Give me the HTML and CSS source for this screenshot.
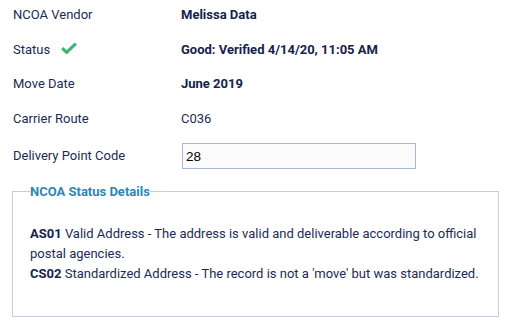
FILE: index.html
```html
<!DOCTYPE html>
<html>
<head>
<meta charset="utf-8">
<link rel="stylesheet" href="styles.css">
</head>
<body>
<div class="panel">
  <div class="rows">
    <div class="row">
      <div class="label">NCOA Vendor</div>
      <div class="value strong">Melissa Data</div>
    </div>
    <div class="row">
      <div class="label">Status
        <svg class="check" viewBox="0 0 16 12" width="16" height="12"><path d="M1.2 6.2 L5.6 10.4 L14.8 1.6" fill="none" stroke="#3bb77a" stroke-width="3.2" stroke-linejoin="round"/></svg>
      </div>
      <div class="value strong">Good: Verified 4/14/20, 11:05 AM</div>
    </div>
    <div class="row">
      <div class="label">Move Date</div>
      <div class="value strong">June 2019</div>
    </div>
    <div class="row">
      <div class="label">Carrier Route</div>
      <div class="value">C036</div>
    </div>
    <div class="row">
      <div class="label">Delivery Point Code</div>
      <div class="value"><input class="field" type="text" value="28"></div>
    </div>
  </div>
  <fieldset class="details">
    <legend class="details-title">NCOA Status Details</legend>
    <p class="details-text"><b>AS01</b> Valid Address - The address is valid and deliverable according to official postal agencies.<br><b>CS02</b> Standardized Address - The record is not a 'move' but was standardized.</p>
  </fieldset>
</div>
</body>
</html>
```
FILE: styles.css
```css
html, body {
  margin: 0;
  padding: 0;
  background: #ffffff;
}
body {
  font-family: Roboto, "Liberation Sans", sans-serif;
  font-size: 13px;
  color: #1c2b55;
}
.panel {
  width: 511px;
}
.rows {
  display: flex;
  flex-direction: column;
  gap: 14.5px;
  padding: 5px 0 0 13px;
}
.row {
  display: grid;
  grid-template-columns: 168px 1fr;
  align-items: center;
  height: 20px;
  line-height: 20px;
}
.label {
  display: flex;
  align-items: center;
}
.check {
  margin-left: 11px;
  margin-top: -3px;
}
.strong {
  font-weight: 700;
  color: #14234d;
}
.field {
  box-sizing: border-box;
  width: 234px;
  height: 26px;
  margin: 0 0 0 1px;
  padding: 0 3px;
  border: 1px solid #a9b8d6;
  background: #fbfbfb;
  font-family: "Liberation Sans", Arial, sans-serif;
  font-size: 13.5px;
  color: #000;
  outline: none;
}
.details {
  margin: 21px 12px 0 12px;
  padding: 0 17px 32px 17px;
  border: 1px solid #c3cfe0;
  min-width: 0;
}
.details-title {
  padding: 0;
  font-weight: 700;
  color: #2b87b3;
  line-height: 15px;
}
.details-text {
  margin: 25px 0 0 0;
  line-height: 20px;
  color: #1c2b55;
}
.details-text b {
  color: #14234d;
}
```
